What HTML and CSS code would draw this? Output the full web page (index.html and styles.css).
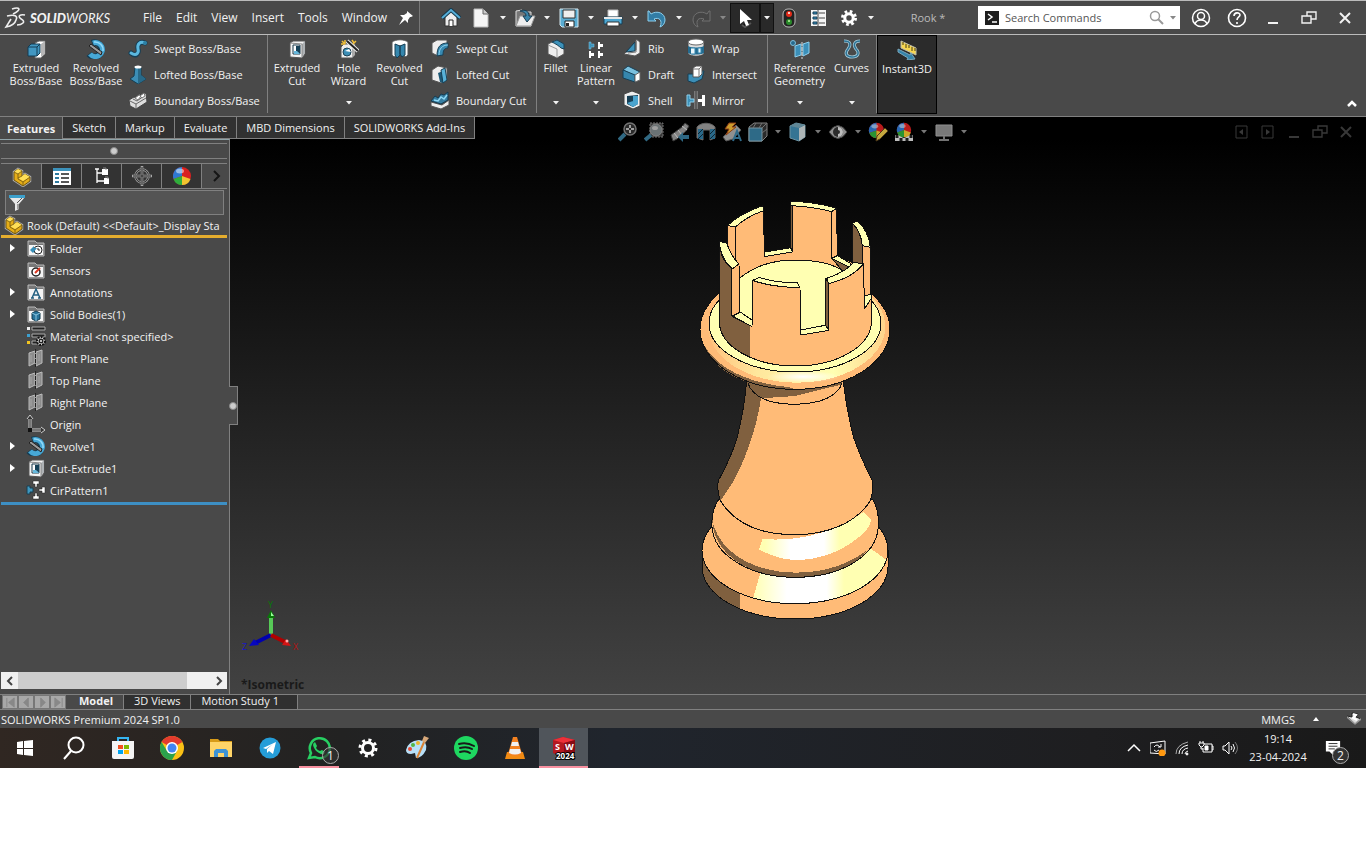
FILE: index.html
```html
<!DOCTYPE html>
<html lang="en">
<head>
  <meta charset="utf-8">
  <meta name="viewport" content="width=device-width, initial-scale=1">
  <title>Rook * - SOLIDWORKS Premium 2024</title>
  <link rel="stylesheet" href="styles.css">
</head>
<body>
  <!-- shared icons -->
  <svg class="defs" aria-hidden="true">
    <symbol id="caret" viewBox="0 0 6 4"><path d="M0 0h6L3 3.500z" fill="currentColor"/></symbol>
    <symbol id="arrow-right" viewBox="0 0 5 8"><path d="M0 0l5 4-5 4z" fill="#fff"/></symbol>
    <symbol id="part" viewBox="0 0 20 20">
      <path d="M2 5l4-3 4 2v5l3-2 5 3v4l-7 5-9-6z" fill="#e9b91f" stroke="#aaa" stroke-width="2.500"/>
      <path d="M2 5l4-3 4 2v5l3-2 5 3v4l-7 5-9-6z" fill="#e5ad18" stroke="#6f5510"/>
      <path d="M2 5l4-3 4 2-4 3zM6 11l4-2 3-2 5 3-7 4z" fill="#ffdf57"/>
      <path d="M2 5l4 2v5l5 3v4M6 7l4-3M11 15l7-5M6 11l4-2" fill="none" stroke="#6f5510" stroke-width=".8"/>
    </symbol>
    <symbol id="revolve" viewBox="0 0 20 20">
      <path d="M6 4A7 7 0 1 1 3 15" fill="none" stroke="#153e55" stroke-width="6.500"/>
      <path d="M7 4A7 7 0 1 1 4 15" fill="none" stroke="#47a8d6" stroke-width="5"/>
      <path d="M8 3A8 8 0 0 1 17 12" fill="none" stroke="#91dafa" stroke-width="1.500"/>
      <path d="M3 7l2-2 11 8-1 3z" fill="#999" stroke="#222"/>
    </symbol>
    <symbol id="cut" viewBox="0 0 20 20">
      <path d="M3 4l3-2h12v13l-3 4-12-1z" fill="#f4f4f4" stroke="#555"/>
      <path d="M15 18V5l3-3v12z" fill="#aeb2b5"/>
      <path d="M6 6h7v9H6z" fill="#fff" stroke="#18384a"/>
      <path d="M9 7h4v8l-4-3z" fill="#174158"/><path d="M7 12h3l3 3H7z" fill="#67b9dd"/>
      <path d="M3 4l12 1v13" fill="none" stroke="#888"/>
    </symbol>
    <symbol id="plane" viewBox="0 0 20 20">
      <path d="M3 5l6-2v12l-6 3zM10 4l6-2v13l-6 3z" fill="#8c8c8c" stroke="#bbb"/>
      <path d="M9.500 1v18" stroke="#222" stroke-dasharray="4 1"/>
      <path d="M5 7v7M13 6v7" stroke="#a5a5a5"/>
    </symbol>
    <symbol id="folder" viewBox="0 0 20 20">
      <path d="M2 3h7l2 2h7v13H2z" fill="#777" stroke="#bbb"/><path d="M3 7h14v10H3z" fill="#f5f5f5"/>
    </symbol>
    <symbol id="ball" viewBox="0 0 20 20">
      <circle cx="10" cy="10" r="9" fill="#d92020"/>
      <path d="M10 10V1A9 9 0 0 0 1.500 13z" fill="#2e78d2"/>
      <path d="M10 10l-8.500 3A9 9 0 0 0 10 19z" fill="#2fae3c"/>
      <path d="M10 10v9a9 9 0 0 0 8.500-6z" fill="#f1c42f"/>
      <ellipse cx="8" cy="5" rx="4" ry="2.500" fill="#fff" opacity=".5"/>
    </symbol>
    <symbol id="restore" viewBox="0 0 16 16">
      <path d="M1 6h9v7H1zM6 6V2h9v7h-5" fill="none" stroke="currentColor" stroke-width="1.400"/>
    </symbol>
    <symbol id="close" viewBox="0 0 16 16"><path d="M3 3l10 10M13 3L3 13" stroke="currentColor" stroke-width="2"/></symbol>
    <symbol id="minimize" viewBox="0 0 16 16"><path d="M3 13h10" stroke="currentColor" stroke-width="2"/></symbol>
  </svg>

  <div class="app">
    <header class="titlebar">
      <div class="logo">
        <svg width="22" height="22" viewBox="0 0 22 22" fill="none" stroke="#eee" stroke-width="1.600">
          <path d="M8 2q6-2 7 0 0 2-6 5"/>
          <path d="M3 9c8-2 11 0 9 4-1 4-5 6-10 7l5-8"/>
          <path d="M21 8c-5-1-7 1-5 3s5 3 3 5-4 2-6 2"/>
        </svg>
        <span><b>SOLID</b>WORKS</span>
      </div>
      <nav class="menu">
        <button>File</button><button>Edit</button><button>View</button><button>Insert</button><button>Tools</button><button>Window</button>
        <button class="pin" aria-label="Pin menu"><svg width="16" height="16" viewBox="0 0 16 16"><path d="M9 1l6 5-2 1h-1l-2 3v3L7 10l-6 5 4-7-3-3h4l3-2z" fill="#fff"/></svg></button>
      </nav>
      <div class="quick">
        <button aria-label="Home"><svg width="20" height="20" viewBox="0 0 20 20"><path d="M4 9v9h12V9l-6-6z" fill="#eee" stroke="#333"/><path d="M8 18v-6h4v6" fill="#fff" stroke="#222"/><path d="M1 10l9-8 9 8" fill="none" stroke="#18394b" stroke-width="4"/><path d="M1 10l9-8 9 8" fill="none" stroke="#55aed8" stroke-width="2"/></svg></button>
        <button aria-label="New"><svg width="20" height="20" viewBox="0 0 20 20"><path d="M3 1h9l5 5v13H3z" fill="#f5f5f5" stroke="#bbb"/><path d="M12 1v5h5" fill="#ccc" stroke="#666"/></svg></button>
        <button class="drop" aria-label="New options"><svg><use href="#caret"/></svg></button>
        <button aria-label="Open"><svg width="22" height="20" viewBox="0 0 22 20"><path d="M2 18V3l6-1 2 2h7v14z" fill="#777" stroke="#ddd"/><path d="M2 18l4-10h15l-4 10z" fill="#eee" stroke="#999"/><path d="M6 3c5-2 9 0 9 5h3l-5 6-4-6h3c0-3-2-4-6-5z" fill="#3b86aa" stroke="#173b50"/></svg></button>
        <button class="drop" aria-label="Open options"><svg><use href="#caret"/></svg></button>
        <button aria-label="Save"><svg width="20" height="20" viewBox="0 0 20 20"><path d="M1 1h18v18H3l-2-2z" fill="#59acd2" stroke="#d5e8f0"/><path d="M4 2h12v8H4z" fill="#eee" stroke="#333"/><path d="M6 13h9v6H6z" fill="#fff" stroke="#222"/><path d="M7 15h3v3H7z" fill="#222"/></svg></button>
        <button class="drop" aria-label="Save options"><svg><use href="#caret"/></svg></button>
        <button aria-label="Print"><svg width="20" height="20" viewBox="0 0 20 20"><path d="M5 2h10v7H5z" fill="#fff" stroke="#bbb"/><path d="M1 9h18v7H1z" fill="#4ca6d0" stroke="#164059"/><path d="M1 9h18v2H1z" fill="#e8e8e8"/><path d="M4 14h12v4H4z" fill="#fff" stroke="#333"/></svg></button>
        <button class="drop" aria-label="Print options"><svg><use href="#caret"/></svg></button>
        <button aria-label="Undo"><svg width="20" height="20" viewBox="0 0 20 20"><path d="M2 3l2 3c6-4 14-1 14 6 0 3-2 6-5 7 3-7-1-10-6-8l2 2H1V3z" fill="#327da5" stroke="#8dd0ee"/></svg></button>
        <button class="drop" aria-label="Undo options"><svg><use href="#caret"/></svg></button>
        <button aria-label="Redo" disabled><svg width="20" height="20" viewBox="0 0 20 20"><path d="M18 3l-2 3C10 2 2 5 2 12c0 3 2 6 5 7-3-7 1-10 6-8l-2 2h8V3z" fill="#454545" stroke="#707070"/></svg></button>
        <button class="drop dim" aria-label="Redo options" disabled><svg><use href="#caret"/></svg></button>
        <button class="pressed" aria-label="Select"><svg width="16" height="20" viewBox="0 0 16 20"><path d="M5 17l3 2 6-4" stroke="#555" stroke-width="2"/><path d="M3 1v15l4-3 2 5 3-1-2-5h5z" fill="#fff"/></svg></button>
        <button class="drop pressed" aria-label="Select options"><svg><use href="#caret"/></svg></button>
        <button aria-label="Rebuild"><svg width="14" height="20" viewBox="0 0 14 20"><rect x="1" y="1" width="12" height="18" rx="5" fill="#222" stroke="#bbb"/><circle cx="7" cy="6" r="3" fill="#e32b19"/><circle cx="7" cy="14" r="3" fill="#298a2a"/><circle cx="7" cy="5" r="1" fill="#fff"/><circle cx="7" cy="13" r="1" fill="#bdf59f"/></svg></button>
        <button aria-label="File properties"><svg width="18" height="18" viewBox="0 0 18 18"><path d="M1 1h15v16H1z" fill="#f5f5f5"/><path d="M3 3h4v2H3zM3 8h4v2H3zM3 13h4v2H3z" fill="#378fc0" stroke="#173f55"/><path d="M9 4h6M9 9h6M9 14h6M8 1v16" stroke="#444"/></svg></button>
        <button aria-label="Options"><svg width="18" height="18" viewBox="0 0 18 18"><circle cx="9" cy="9" r="6.500" fill="none" stroke="#fff" stroke-width="3" stroke-dasharray="2.600 2.500"/><circle cx="9" cy="9" r="4.200" fill="none" stroke="#fff" stroke-width="3"/></svg></button>
        <button class="drop" aria-label="More options"><svg><use href="#caret"/></svg></button>
      </div>
      <div class="doc-title">Rook *</div>
      <div class="search">
        <svg width="14" height="14" viewBox="0 0 14 14"><path d="M0 0h14v14H0z" fill="#1e1e1e"/><path d="M3 3l4 3-4 3M7 11h5" fill="none" stroke="#fff" stroke-width="1.500"/></svg>
        <input type="text" placeholder="Search Commands" aria-label="Search Commands">
        <svg width="15" height="15" viewBox="0 0 15 15" fill="none" stroke="#999"><circle cx="6" cy="6" r="4.500" stroke-width="1.500"/><path d="M9 9l5 5" stroke-width="2"/></svg>
        <button class="drop" aria-label="Search options"><svg><use href="#caret"/></svg></button>
      </div>
      <div class="window-buttons">
        <button aria-label="Login"><svg width="20" height="20" viewBox="0 0 20 20" fill="none" stroke="#fff" stroke-width="1.500"><circle cx="10" cy="10" r="8.500"/><circle cx="10" cy="8" r="3.500"/><path d="M4 16c1-3 3-4 6-4s5 1 6 4"/></svg></button>
        <button aria-label="Help"><svg width="20" height="20" viewBox="0 0 20 20" fill="none" stroke="#fff" stroke-width="1.600"><circle cx="10" cy="10" r="8.500"/><path d="M7 8c0-4 6-4 6-1 0 2-3 2-3 5M10 14v2"/></svg></button>
        <button aria-label="Minimize"><svg width="16" height="16"><use href="#minimize"/></svg></button>
        <button aria-label="Restore"><svg width="16" height="16"><use href="#restore"/></svg></button>
        <button aria-label="Close"><svg width="16" height="16"><use href="#close"/></svg></button>
      </div>
    </header>

    <section class="ribbon">
      <div class="group group-boss">
        <button class="big w60"><svg viewBox="0 0 20 20"><path d="M9 4l4-2h6v13l-4 4H9z" fill="#fff" stroke="#666"/><path d="M15 18V5l4-3v13z" fill="#b5b5b5"/><path d="M2 8l3-3h9v9l-3 3H2z" fill="#4297c1" stroke="#123d54"/><path d="M2 8h9v9M11 8l3-3" fill="none" stroke="#123d54"/></svg>Extruded Boss/Base</button>
        <button class="big w60"><svg><use href="#revolve"/></svg>Revolved Boss/Base</button>
        <div class="stack">
          <button><svg viewBox="0 0 20 20"><path d="M3 15c6 5 8-1 7-4-1-5 2-8 7-6" fill="none" stroke="#163f56" stroke-width="5" stroke-linecap="round"/><path d="M3 15c6 4 8-1 7-4-1-5 2-8 7-6" fill="none" stroke="#5bb8df" stroke-width="3" stroke-linecap="round"/><circle cx="17" cy="5" r="2" fill="#2c80a5"/></svg>Swept Boss/Base</button>
          <button><svg viewBox="0 0 20 20"><path d="M7 3h6v8l5 4-8 5-8-5 4-3z" fill="#3c8eb6" stroke="#173e52"/><path d="M10 3h3v8l5 4-8 5z" fill="#286988"/><ellipse cx="10" cy="3" rx="3.500" ry="1.500" fill="#fff"/></svg>Lofted Boss/Base</button>
          <button><svg viewBox="0 0 20 20"><path d="M1 10l5-3 2 1 3-4 3 1 4-2 1 9-11 7-6-3z" fill="#ddd" stroke="#444"/><path d="M2 11l6 3 10-6M8 14v5M5 9l4 2 7-5" fill="none" stroke="#666"/><path d="M7 8l4-3 2 1-3 4zM12 6l4-3 1 3-3 2z" fill="#fff" stroke="#777"/></svg>Boundary Boss/Base</button>
        </div>
      </div>
      <div class="group">
        <button class="big w58"><svg><use href="#cut"/></svg>Extruded Cut</button>
        <button class="big w45"><svg viewBox="0 0 20 20"><path d="M2 8l3-3h11v11l-3 3H2z" fill="#eee" stroke="#555"/><path d="M13 19V8l3-3v11z" fill="#aaa"/><circle cx="8" cy="13" r="4" fill="#3c8eb6" stroke="#1d4255"/><path d="M6 12l4-2 2 3z" fill="#fff"/><path d="M8 2l11 10" stroke="#eee" stroke-width="4"/><path d="M8 2l11 10" stroke="#222" stroke-width="2"/><path d="M3 2l2 2M6 1v4M13 1l2 3M17 2l-3 3M2 5h4" stroke="#f0c03b" stroke-width="1.500"/></svg>Hole Wizard<svg class="more"><use href="#caret"/></svg></button>
        <button class="big w57"><svg viewBox="0 0 20 20"><path d="M2 3c4-3 12-3 16 0v13c-1 2-4 2-5 1V7H7v10c-2 1-4 1-5-1z" fill="#fff" stroke="#555"/><path d="M5 5l5 2v9l-3 3-2-3zM10 7l5-2v11l-3 2-2-3z" fill="#3586ad" stroke="#173f55"/></svg>Revolved Cut</button>
        <div class="stack">
          <button><svg viewBox="0 0 20 20"><path d="M2 5l5-3h10v6l-9 10-6-3z" fill="#eee" stroke="#555"/><path d="M7 18C7 9 10 5 18 5v5c-4 0-5 3-5 7z" fill="#388ab2" stroke="#173f55"/><path d="M9 17c0-6 3-10 9-10" fill="none" stroke="#8fd3ee"/></svg>Swept Cut</button>
          <button><svg viewBox="0 0 20 20"><path d="M2 6l6-4 9 2v12l-6 3-9-3z" fill="#eee" stroke="#555"/><path d="M8 9l5-2v12l-3-1z" fill="#1d5876"/><path d="M11 6l4-2 2 12-4 3z" fill="#58b1d8" stroke="#173f55"/></svg>Lofted Cut</button>
          <button><svg viewBox="0 0 20 20"><path d="M1 12l11 3 7-5v5l-8 4-10-3z" fill="#eee" stroke="#555"/><path d="M1 11l4-5 3 2 3-4 3 1 4-3v8l-7 4z" fill="#367ea2" stroke="#163b50"/><path d="M4 10l4 1 3-4 3 2 3-4" fill="none" stroke="#8ed8f5" stroke-width="1.500"/></svg>Boundary Cut</button>
        </div>
      </div>
      <div class="group">
        <button class="big w37"><svg viewBox="0 0 20 20"><path d="M2 5l8-4 8 4v10l-7 4-9-4z" fill="#eee" stroke="#555"/><path d="M6 3l5-2 7 4v5l-3-1c-2-2-5-4-9-6z" fill="#3d91b9" stroke="#173f55"/><path d="M2 6l9 4v9" fill="none" stroke="#999"/></svg>Fillet<svg class="more"><use href="#caret"/></svg></button>
        <button class="big w44"><svg viewBox="0 0 20 20"><g fill="#fff"><path d="M12 3h2v2h3v3h-3v2h-2zM3 12h2v2h3v3H5v2H3zM12 12h2v2h3v3h-3v2h-2z"/><path d="M3 3h2v2h3v3H5v2H3z" fill="#3d91b9" stroke="#7fc9e8" stroke-width=".5"/></g></svg>Linear Pattern<svg class="more"><use href="#caret"/></svg></button>
        <div class="stack w64">
          <button><svg viewBox="0 0 20 20"><path d="M14 1l4 3v11l-5 3-11-2 3-3 9-1z" fill="#eee" stroke="#555"/><path d="M13 4v9l-9 1z" fill="#3d91b9" stroke="#163b50"/><path d="M14 3v11l-8 1" fill="none" stroke="#777"/></svg>Rib</button>
          <button><svg viewBox="0 0 20 20"><path d="M1 6l5-4 12 6-5 4z" fill="#7bc1df" stroke="#173f55"/><path d="M1 6l12 5v7L1 14z" fill="#3687ae" stroke="#173f55"/><path d="M13 11l5-3v8l-5 2z" fill="#fff" stroke="#666"/></svg>Draft</button>
          <button><svg viewBox="0 0 20 20"><path d="M2 4l8-3 8 3v12l-7 3-9-4z" fill="#eee" stroke="#444"/><path d="M5 6l11-1v9l-5 3-6-3z" fill="#173f55"/><path d="M11 6h5v8l-5-2zM5 13l6-2 5 3-5 3z" fill="#4ba4ce"/></svg>Shell</button>
        </div>
        <div class="stack w85">
          <button><svg viewBox="0 0 20 20"><path d="M2 4v12c4 3 12 3 16 0V4z" fill="#ddd" stroke="#444"/><ellipse cx="10" cy="4" rx="8" ry="3" fill="#fff" stroke="#666"/><path d="M2 8c4 2 12 2 16 0v7c-4 2-12 2-16 0z" fill="#256b8f"/><path d="M5 10h4v6H5M12 10h3v5h-3z" fill="#eaf6fb" stroke="#3587b0"/></svg>Wrap</button>
          <button><svg viewBox="0 0 20 20"><path d="M2 10h6v-3h10l-2 8-8 4-6-2z" fill="#3c8eb6" stroke="#183e52"/><path d="M7 4l3-2h6v8l-3 3H7z" fill="#fff" stroke="#555"/><path d="M13 13V5l3-3M7 5h6" stroke="#777" fill="none"/></svg>Intersect</button>
          <button><svg viewBox="0 0 20 20"><path d="M1 5h3v4h4v3H4v4H1z" fill="#3d91b9" stroke="#8ed0ec"/><path d="M19 5h-3v4h-4v3h4v4h3z" fill="#fff"/><path d="M10 1v18" stroke="#aaa" stroke-width="3"/><path d="M10 1v18" stroke="#111"/></svg>Mirror</button>
        </div>
      </div>
      <div class="group">
        <button class="big w63"><svg viewBox="0 0 20 20"><circle cx="3" cy="4" r="2.500" fill="#286b8e" stroke="#7dbddb"/><path d="M5 7l6-2v11l-6 2zM13 5l6-2v11l-6 3z" fill="#3b8fb9" stroke="#8dd0ee"/><path d="M12 3v17" stroke="#ddd" stroke-dasharray="4 1"/></svg>Reference Geometry<svg class="more"><use href="#caret"/></svg></button>
        <button class="big w41"><svg viewBox="0 0 20 20" fill="none"><path d="M2 2c7 0 7 4 4 8-4 5-1 8 4 8 6 0 8-4 4-8-3-4-2-8 4-8" stroke="#a8ccda" stroke-width="3"/><path d="M2 2c7 0 7 4 4 8-4 5-1 8 4 8 6 0 8-4 4-8-3-4-2-8 4-8" stroke="#2d7395" stroke-width="1.500"/></svg>Curves<svg class="more"><use href="#caret"/></svg></button>
      </div>
      <button class="big instant"><svg viewBox="0 0 20 20"><path d="M4 1l15 7v7L4 8z" fill="#f7d650" stroke="#bba"/><path d="M6 2v3M9 4v4M12 5v3M15 7v4M18 8v3" stroke="#443a10"/><path d="M1 9l12 6 1-2 4 6-8 1 1-2L1 12z" fill="#3684aa" stroke="#79a7bc"/></svg>Instant3D</button>
      <button class="collapse" aria-label="Collapse ribbon"><svg width="12" height="8" viewBox="0 0 12 8"><path d="M2 6l4-4 4 4" fill="none" stroke="#fff" stroke-width="2.500"/></svg></button>
    </section>

    <main class="document">
      <div class="document-bar">
        <nav class="tabs">
          <button class="active">Features</button><button>Sketch</button><button>Markup</button><button>Evaluate</button><button>MBD Dimensions</button><button>SOLIDWORKS Add-Ins</button>
        </nav>
        <div class="view-tools">
          <button aria-label="Zoom to fit"><svg viewBox="0 0 20 20"><path d="M1 18l6-6" stroke="#3a7c9b" stroke-width="4"/><circle cx="12" cy="7" r="6" fill="#333" stroke="#888" stroke-width="1.500"/><path d="M12 3v8M8 7h8" stroke="#bbb" stroke-dasharray="3 2" stroke-width="2"/></svg></button>
          <button aria-label="Zoom to area"><svg viewBox="0 0 20 20"><path d="M6 1h13v14H6z" fill="#444" stroke="#888" stroke-dasharray="2 1"/><path d="M1 18l6-5" stroke="#3a7c9b" stroke-width="4"/><circle cx="12" cy="8" r="6" fill="#7d8689" stroke="#999"/><ellipse cx="11" cy="6" rx="3" ry="2" fill="#bbb"/></svg></button>
          <button aria-label="Previous view"><svg viewBox="0 0 20 20"><path d="M1 13L12 5l3-4 4 3-3 5-9 8-4 2z" fill="#999" stroke="#444"/><path d="M4 11l4 5M8 8l4 5M12 4l5 4" stroke="#ddd"/><path d="M8 15l5-5v3h6v4h-6v3z" fill="#37799a"/></svg></button>
          <button aria-label="Section view"><svg viewBox="0 0 20 20"><path d="M1 5c4-5 14-5 18 0v11l-5 2V8H7v10l-6-2z" fill="#999" stroke="#777"/><path d="M2 7h5v10H2zM14 7h5v10h-5z" fill="#327ba0"/><path d="M2 12l5-5M2 17l5-5M14 12l5-5M14 17l5-5" stroke="#0c2a3b"/></svg></button>
          <button aria-label="Dynamic annotation views"><svg viewBox="0 0 20 20"><path d="M1 15L14 3l5 5-8 9-7 2z" fill="#aaa" stroke="#666"/><path d="M7 1h7l-4 4h4L4 13l3-6H3z" fill="#efb737" stroke="#a54618"/><path d="M11 19l4-10 4 10M12 16h6" fill="none" stroke="#387da2" stroke-width="2"/></svg></button>
          <button aria-label="View orientation"><svg viewBox="0 0 20 20"><path d="M1 5l5-4h13v13l-5 5H1z" fill="#333" stroke="#999"/><path d="M1 6h13v13H1z" fill="#377d9f" stroke="#8dafbc"/><path d="M14 6l5-5M8 1l-3 5M14 1l-3 5M14 11l5-4" stroke="#888"/></svg></button>
          <button class="drop" aria-label="Orientation options"><svg><use href="#caret"/></svg></button>
          <button aria-label="Display style"><svg viewBox="0 0 20 20"><path d="M2 4l6-3 9 2v12l-6 4-9-3z" fill="#3f89ad" stroke="#7eabbe"/><path d="M11 6l6-3v12l-6 4z" fill="#ccd5d8"/><path d="M2 4l9 2 6-3-9-2z" fill="#719eaf"/></svg></button>
          <button class="drop" aria-label="Display options"><svg><use href="#caret"/></svg></button>
          <button aria-label="Hide or show items"><svg viewBox="0 0 20 20"><path d="M1 10q9-13 18 0-9 13-18 0z" fill="#aaa" stroke="#555"/><circle cx="10" cy="10" r="5" fill="#333"/><path d="M10 5a5 5 0 0 1 0 10z" fill="#ddd"/><circle cx="10" cy="10" r="2" fill="#333"/></svg></button>
          <button class="drop" aria-label="Visibility options"><svg><use href="#caret"/></svg></button>
          <button aria-label="Edit appearance"><svg viewBox="0 0 20 20"><use href="#ball" width="17" height="17"/><path d="M8 19l1-5 8-8 3 3-8 8z" fill="#e8c64b" stroke="#5b431d"/></svg></button>
          <button aria-label="Apply scene"><svg viewBox="0 0 20 20"><path d="M1 13h18v6H1z" fill="#ddd"/><path d="M3 13v3M7 16v3M10 13v3M13 16v3M17 13v3" stroke="#222" stroke-width="3"/><use href="#ball" x="2" width="16" height="16"/></svg></button>
          <button class="drop" aria-label="Scene options"><svg><use href="#caret"/></svg></button>
          <button aria-label="View settings"><svg viewBox="0 0 20 20"><path d="M2 3h16v11H2z" fill="#8f8f8f" stroke="#aaa"/><path d="M10 14v3M5 18h10" stroke="#888" stroke-width="2"/></svg></button>
          <button class="drop" aria-label="View setting options"><svg><use href="#caret"/></svg></button>
        </div>
        <div class="child-buttons">
          <button aria-label="Previous pane"><svg width="14" height="14" viewBox="0 0 14 14"><path d="M1 1h11v12H1z" fill="none" stroke="currentColor"/><path d="M8 4v6L4 7z" fill="currentColor"/></svg></button>
          <button aria-label="Next pane"><svg width="14" height="14" viewBox="0 0 14 14"><path d="M1 1h11v12H1z" fill="none" stroke="currentColor"/><path d="M5 4v6l4-3z" fill="currentColor"/></svg></button>
          <button aria-label="Minimize document"><svg width="16" height="16"><use href="#minimize"/></svg></button>
          <button aria-label="Restore document"><svg width="16" height="16"><use href="#restore"/></svg></button>
          <button aria-label="Close document"><svg width="16" height="16"><use href="#close"/></svg></button>
        </div>
      </div>

      <div class="workspace">
        <aside class="sidebar">
          <div class="grip"><i></i></div>
          <div class="panel-tabs">
            <button class="active" aria-label="Feature tree"><svg><use href="#part"/></svg></button>
            <button aria-label="Properties"><svg viewBox="0 0 20 20"><path d="M1 2h18v17H1z" fill="#fff"/><path d="M1 2h18v3H1z" fill="#3c92bb"/><path d="M3 7h4v2H3zM3 11h4v2H3zM3 15h4v2H3z" fill="#2f7ba0"/><path d="M9 8h8M9 12h8M9 16h8" stroke="#222" stroke-width="1.500"/></svg></button>
            <button aria-label="Configurations"><svg viewBox="0 0 20 20"><path d="M3 3h4M5 3v14M5 7h6M5 15h7" fill="none" stroke="#fff" stroke-width="1.300"/><path d="M10 3h6v6h-6zM12 12h5v6h-5z" fill="#fff"/><path d="M11 2h3v2M13 11h3v2" stroke="#888" fill="none"/></svg></button>
            <button aria-label="Dimensions"><svg viewBox="0 0 20 20"><circle cx="10" cy="10" r="6.500" fill="#333" stroke="#999" stroke-width="2.500"/><circle cx="10" cy="10" r="6.500" fill="none" stroke="#222"/><path d="M10 0v20M0 10h20" stroke="#aaa" stroke-width="2.500"/><path d="M10 1v18M1 10h18" stroke="#222"/></svg></button>
            <button aria-label="Display manager"><svg><use href="#ball"/></svg></button>
            <button class="next" aria-label="More panels"><svg viewBox="0 0 20 20"><path d="M7 5l5 5-5 5" fill="none" stroke="#151515" stroke-width="2"/></svg></button>
          </div>
          <label class="filter">
            <svg width="18" height="18" viewBox="0 0 18 18"><path d="M1 3l6 7v7l4-2v-5l6-7z" fill="#e8e8e8"/><path d="M10 10v5M9 9l5-5" stroke="#555"/><path d="M1 1h16v3H1z" fill="#3ca0cc"/></svg>
            <input type="text" aria-label="Filter tree">
          </label>
          <div class="root"><svg><use href="#part"/></svg><span>Rook (Default) &lt;&lt;Default&gt;_Display Sta</span></div>
          <ul class="tree">
            <li><svg class="expand"><use href="#arrow-right"/></svg><svg viewBox="0 0 20 20"><use href="#folder"/><circle cx="12" cy="12" r="4" fill="#fff" stroke="#222"/><path d="M12 10v2h2" stroke="#222" fill="none"/><path d="M4 12l4-4v2h3l-4 5z" fill="#398fb8"/></svg>Folder</li>
            <li><svg viewBox="0 0 20 20"><use href="#folder"/><circle cx="10" cy="12" r="4" fill="#fff" stroke="#222" stroke-width="1.500"/><path d="M9 13l5-5" stroke="#dc3721" stroke-width="2"/></svg>Sensors</li>
            <li><svg class="expand"><use href="#arrow-right"/></svg><svg viewBox="0 0 20 20"><use href="#folder"/><path d="M6 16l4-9 4 9M7 13h6M5 16h3M12 16h3" fill="none" stroke="#246080" stroke-width="1.500"/></svg>Annotations</li>
            <li><svg class="expand"><use href="#arrow-right"/></svg><svg viewBox="0 0 20 20"><use href="#folder"/><path d="M6 9l4-2 4 2v6l-4 2-4-2z" fill="#26739a" stroke="#10384d"/><path d="M6 9l4 2 4-2M10 11v6" fill="none" stroke="#8cc5df"/></svg>Solid Bodies(1)</li>
            <li><svg viewBox="0 0 20 20"><path d="M1 1h3v3H1z" fill="#eee"/><path d="M1 8h3v3H1z" fill="#3ca0d0"/><path d="M1 15h3v3H1z" fill="#f0c320"/><path d="M6 1h13v3H6zM6 8h13v3H6zM6 15h8v3H6z" fill="#222" stroke="#aaa"/><circle cx="15" cy="15" r="4" fill="#eee" stroke="#111" stroke-width="2" stroke-dasharray="2 1"/><circle cx="15" cy="15" r="2.500" fill="#222"/><circle cx="15" cy="15" r="1" fill="#eee"/></svg>Material &lt;not specified&gt;</li>
            <li><svg><use href="#plane"/></svg>Front Plane</li>
            <li><svg><use href="#plane"/></svg>Top Plane</li>
            <li><svg><use href="#plane"/></svg>Right Plane</li>
            <li><svg viewBox="0 0 20 20"><path d="M4 3v13h13" fill="none" stroke="#ccc" stroke-width="3"/><path d="M4 2v14h12" fill="none" stroke="#222"/><path d="M1 5l3-4 3 4M15 13l4 3-4 3" fill="#333" stroke="#ccc"/><path d="M2 14h4v4H2z" fill="#111"/></svg>Origin</li>
            <li><svg class="expand"><use href="#arrow-right"/></svg><svg><use href="#revolve"/></svg>Revolve1</li>
            <li><svg class="expand"><use href="#arrow-right"/></svg><svg><use href="#cut"/></svg>Cut-Extrude1</li>
            <li><svg viewBox="0 0 20 20"><path d="M7 1h6v3h-2v3H9V4H7zM7 19h6v-3h-2v-3H9v3H7zM19 7v6h-3v-2h-3V9h3V7z" fill="#fff" stroke="#222" stroke-width=".5"/><path d="M1 6h3v2h3v4H4v2H1z" fill="#3e97bf" stroke="#193f50"/></svg>CirPattern1</li>
          </ul>
          <div class="scrollbar">
            <button aria-label="Scroll left"><svg viewBox="0 0 8 10"><path d="M6 1L2 5l4 4" fill="none" stroke="#444" stroke-width="2"/></svg></button>
            <div class="track"><div class="thumb"></div></div>
            <button aria-label="Scroll right"><svg viewBox="0 0 8 10"><path d="M2 1l4 4-4 4" fill="none" stroke="#444" stroke-width="2"/></svg></button>
          </div>
          <button class="splitter" aria-label="Hide panel"><i></i></button>
        </aside>

        <section class="viewport">
          <svg class="rook" viewBox="48 24 594 1272" stroke-linejoin="round" role="img" aria-label="Rook model">
            <defs>
              <linearGradient id="shine-base" gradientUnits="userSpaceOnUse" x1="220" y1="0" x2="620" y2="0"><stop offset="0" stop-color="#ffffb2"/><stop offset=".25" stop-color="#fff"/><stop offset=".55" stop-color="#fff"/><stop offset=".68" stop-color="#ffffb2"/></linearGradient>
              <linearGradient id="shine-ring" gradientUnits="userSpaceOnUse" x1="237" y1="0" x2="573" y2="0"><stop offset=".05" stop-color="#ffffb2"/><stop offset=".28" stop-color="#fff"/><stop offset=".58" stop-color="#fff"/><stop offset=".72" stop-color="#ffffb2"/></linearGradient>
              <radialGradient id="shine-rim"><stop offset="0" stop-color="#fff"/><stop offset="1" stop-color="#fff" stop-opacity="0"/></radialGradient>
              <linearGradient id="rim" gradientUnits="userSpaceOnUse" x1="60" y1="0" x2="630" y2="0"><stop offset="0" stop-color="#ffbb77"/><stop offset=".3" stop-color="#ffe79c"/><stop offset=".7" stop-color="#ffffb2"/><stop offset="1" stop-color="#ffd088"/></linearGradient>
              <clipPath id="clip-base"><ellipse cx="345" cy="1081" rx="279" ry="160"/></clipPath>
              <clipPath id="clip-left"><path d="M0 0h210v560H0z"/></clipPath>
              <clipPath id="clip-foot"><path d="M0 1000h180v300H0z"/></clipPath>
            </defs>
            <!-- foot -->
            <path d="M66 1080V1130A279 157 0 0 0 624 1130V1080z" fill="#ffbb77"/>
            <path d="M66 1080V1130A279 157 0 0 0 624 1130V1080z" fill="#80603f" clip-path="url(#clip-foot)"/>
            <path d="M66 1080V1130A279 157 0 0 0 624 1130V1080z" class="edge"/>
            <ellipse cx="345" cy="1081" rx="279" ry="160" fill="#ffbb77"/>
            <path d="M242 1145L218 1230 300 1260 500 1260 640 1125 562 1068 480 1130z" fill="url(#shine-base)" clip-path="url(#clip-base)"/>
            <ellipse cx="345" cy="1081" rx="279" ry="160" class="edge"/>
            <!-- ring -->
            <path d="M116 928Q92 965 96 1010C100 1095 210 1162 345 1162C480 1162 590 1100 595 1010Q598 960 578 928z" fill="#ffbb77"/>
            <path d="M96 985C98 1095 210 1162 345 1162C440 1162 525 1130 565 1078C510 1120 440 1148 345 1148C215 1148 110 1080 96 985z" fill="#80603f"/>
            <path d="M248 1047Q410 1060 550 967L573 990Q570 1015 535 1043Q450 1110 345 1110Q290 1108 237 1078z" fill="url(#shine-ring)"/>
            <path d="M116 928Q92 965 96 1010C100 1095 210 1162 345 1162C480 1162 590 1100 595 1010Q598 960 578 928z" class="edge"/>
            <!-- body -->
            <path d="M200 575Q192 660 172 740Q155 800 115 872Q110 900 120 930C165 1005 250 1034 345 1034C440 1034 530 1000 572 930Q580 905 577 872Q540 800 520 740Q500 660 490 575z" fill="#ffbb77"/>
            <path d="M200 570Q192 660 172 740Q155 800 115 872Q110 900 122 932L160 875Q200 800 225 710Q238 660 243 625L345 618 487 583 487 570z" fill="#80603f"/>
            <path d="M200 575Q192 660 172 740Q155 800 115 872Q110 900 120 930C165 1005 250 1034 345 1034C440 1034 530 1000 572 930Q580 905 577 872Q540 800 520 740Q500 660 490 575z" class="edge"/>
            <path d="M203 578Q225 642 345 643Q465 640 487 578" class="edge"/>
            <!-- flange -->
            <ellipse cx="345" cy="418" rx="285" ry="180" fill="#ffbb77"/>
            <path d="M66 455C100 555 220 598 345 598L330 592C210 580 110 540 66 455z" fill="#80603f"/>
            <ellipse cx="350" cy="410" rx="266" ry="168" fill="url(#rim)"/>
            <ellipse cx="370" cy="560" rx="110" ry="18" fill="url(#shine-rim)"/>
            <ellipse cx="345" cy="418" rx="285" ry="180" class="edge"/>
            <ellipse cx="345" cy="400" rx="258" ry="146" fill="#ffffb2"/>
            <ellipse cx="345" cy="400" rx="258" ry="146" class="edge"/>
            <!-- battlements, back to front -->
            <path d="M142 107L167 110Q200 80 251 62L253 200 337 186 337 47Q400 50 470 57L472 198 530 225 550 300 550 400H150z" fill="#ffbb77"/>
            <path d="M142 107V240M167 110V260M251 62L253 200M455 65V205M470 57L472 198" class="edge"/>
            <path d="M330 38L337 47V186L330 174z" fill="#80603f" class="edge-fill"/>
            <path d="M255 186L332 173 337 186 253 200z" class="top"/>
            <path d="M142 107Q180 70 248 47L251 62Q200 80 167 110z" class="top"/>
            <path d="M331 34Q410 36 470 55L455 65Q400 50 333 47z" class="top"/>
            <path d="M455 205L490 245 535 240 512 222z" fill="#80603f" class="edge-fill"/>
            <path d="M455 205L472 197 512 220 510 232z" class="top"/>
            <path d="M180 264Q245 210 345 210Q440 210 490 243L530 300 520 430H180z" fill="#ffffb2"/>
            <path d="M180 264Q245 210 345 210Q440 210 490 243" class="edge"/>
            <path d="M517 100Q543 125 547 167V240H517z" fill="#80603f" class="edge-fill"/>
            <path d="M547 167L571 172V350H547z" fill="#ffbb77" class="edge-fill"/>
            <path d="M517 100L532 93Q565 120 571 172L547 167Q543 125 517 100z" class="top"/>
            <path d="M555 318L573 312V345L550 360z" class="top"/>
            <path d="M158 378L182 367 216 390V410z" class="top"/>
            <path d="M363 420L440 405 446 421 362 435z" class="top"/>
            <path d="M437 265L446 280V421L438 408z" fill="#80603f" class="edge-fill"/>
            <path d="M118 160V395A228 133 0 0 0 574 395V325L553 357 551 222Q520 258 446 280V421L362 435 360 293Q280 292 218 272L216 410 155 378V236Q120 205 118 160z" fill="#ffbb77"/>
            <path d="M118 160V395A228 133 0 0 0 574 395V325L553 357 551 222Q520 258 446 280V421L362 435 360 293Q280 292 218 272L216 410 155 378V236Q120 205 118 160z" fill="#80603f" clip-path="url(#clip-left)"/>
            <path d="M118 160V395A228 133 0 0 0 574 395V325L553 357 551 222Q520 258 446 280V421L362 435 360 293Q280 292 218 272L216 410 155 378V236Q120 205 118 160z" class="edge"/>
            <path d="M155 236L177 222 179 367 155 378z" fill="#ffbb77" class="edge-fill"/>
            <path d="M118 155L140 158Q150 195 177 222L158 236Q120 205 118 155z" class="top"/>
            <path d="M218 271L238 262Q290 280 352 277L360 293Q280 292 218 271z" class="top"/>
            <path d="M440 265Q500 245 520 217L550 221Q520 262 446 281z" class="top"/>
          </svg>
          <svg class="triad" width="60" height="60" viewBox="0 0 60 60">
            <path d="M31 38V19" stroke="#57c957" stroke-width="4"/><path d="M27 21l4-8 4 8z" fill="#087808"/><path d="M31 15l3 4h-3z" fill="#9f9"/>
            <path d="M31 38l-16 8" stroke="#0000b0" stroke-width="4"/><path d="M9 49l5-7 5 6z" fill="#0707c0"/>
            <path d="M31 38l16 8" stroke="#b00000" stroke-width="4"/><path d="M51 49l-9-1 4-6z" fill="#d41515"/><circle cx="47" cy="44" r="1.500" fill="#faa"/>
            <text x="28" y="11" fill="#087808">Y</text><text x="2" y="53" fill="#1717c6">Z</text><text x="53" y="53" fill="#b41313">X</text>
          </svg>
          <p class="view-name">*Isometric</p>
        </section>
      </div>
    </main>

    <nav class="model-tabs">
      <div class="step-buttons">
        <button aria-label="First tab" disabled><svg viewBox="0 0 12 12"><path d="M2 1v10M10 1v10L4 6z"/></svg></button>
        <button aria-label="Previous tab" disabled><svg viewBox="0 0 12 12"><path d="M8 1v10L3 6z"/></svg></button>
        <button aria-label="Next tab" disabled><svg viewBox="0 0 12 12"><path d="M4 1v10l5-5z"/></svg></button>
        <button aria-label="Last tab" disabled><svg viewBox="0 0 12 12"><path d="M2 1v10l6-5zM10 1v10"/></svg></button>
      </div>
      <button class="active">Model</button><button>3D Views</button><button class="motion">Motion Study 1</button>
    </nav>

    <footer class="status">
      <span class="version">SOLIDWORKS Premium 2024 SP1.0</span>
      <span>MMGS</span>
      <svg class="up" width="6" height="4" viewBox="0 0 6 4"><path d="M0 4h6L3 0z" fill="#fff"/></svg>
      <svg width="16" height="14" viewBox="0 0 16 14"><path d="M1 4l5 1V1l6 1-2 3 5 2-6 6z" fill="#ddd" stroke="#222"/><path d="M1 4l8 7 6-5v2l-6 5-8-7z" fill="#999"/><path d="M7 2l3 1-3 3 4 2" stroke="#fff" fill="none" stroke-width="2"/></svg>
    </footer>

    <div class="taskbar">
      <button class="start" aria-label="Start"><svg viewBox="0 0 18 18" fill="#fff"><path d="M1 3l6-1v7H1zM8 2l9-1v8H8zM1 10h6v6l-6-1zM8 10h9v7l-9-1z"/></svg></button>
      <button aria-label="Search"><svg viewBox="0 0 24 24" fill="none" stroke="#fff" stroke-width="2"><circle cx="14" cy="9" r="7.500"/><path d="M9 15l-7 8"/></svg></button>
      <button aria-label="Store"><svg viewBox="0 0 24 24"><path d="M7 6V2h10v4" fill="none" stroke="#35b5f1" stroke-width="2"/><path d="M1 5h22v16q0 2-2 2H3q-2 0-2-2z" fill="#f5f5f5"/><path d="M7 9h5v4H7z" fill="#f25022"/><path d="M13 9h5v4h-5z" fill="#7fba00"/><path d="M7 14h5v4H7z" fill="#00a4ef"/><path d="M13 14h5v4h-5z" fill="#ffb900"/></svg></button>
      <button aria-label="Chrome"><svg viewBox="0 0 24 24"><circle cx="12" cy="12" r="12" fill="#fbc116"/><path d="M12 12L1.600 6A12 12 0 0 1 22.400 6z" fill="#e33b2e"/><path d="M1.600 6A12 12 0 0 0 12 24l5-9-5 2-5-2z" fill="#2ba24c"/><circle cx="12" cy="12" r="6" fill="#fff"/><circle cx="12" cy="12" r="4.500" fill="#4285f4"/></svg></button>
      <button aria-label="File Explorer"><svg viewBox="0 0 24 24"><path d="M1 3h8l2 2h12v4H1z" fill="#d89b18"/><path d="M1 6h22v15H1z" fill="#ffd468"/><path d="M5 21v-6l2-2h10l2 2v6h-4v-4H9v4z" fill="#3f93d4"/></svg></button>
      <button aria-label="Telegram"><svg viewBox="0 0 24 24"><circle cx="12" cy="12" r="10.500" fill="#259dd8"/><path d="M5 12l13-6-3 12-4-3-2 2v-4l6-5-7 5z" fill="#fff"/></svg></button>
      <button class="open" aria-label="WhatsApp"><svg viewBox="0 0 24 24"><path d="M2 22l2-5a10 10 0 1 1 4 4z" fill="none" stroke="#27cf62" stroke-width="2.500"/><path d="M8 6l2 4-1 2q2 3 4 3l2-1 3 2q-1 4-6 1-5-3-6-8 0-2 2-3z" fill="#27cf62"/></svg><span class="badge">1</span></button>
      <button aria-label="Settings"><svg viewBox="0 0 24 24" fill="none" stroke="#fff"><circle cx="12" cy="12" r="8" stroke-width="3" stroke-dasharray="3 3.300"/><circle cx="12" cy="12" r="5.500" stroke-width="3"/></svg></button>
      <button aria-label="Paint"><svg viewBox="0 0 24 24"><path d="M1 14Q3 5 14 4q9 1 7 10-4 8-10 8l-1-5-4 1q-5 0-5-4z" fill="#b8e0f8"/><circle cx="5" cy="13" r="2" fill="#e64b35"/><circle cx="8" cy="9" r="2" fill="#52b645"/><circle cx="13" cy="7" r="2" fill="#eeb52c"/><path d="M20 4l-8 18" stroke="#d98335" stroke-width="2"/><path d="M17 5l2-5 5 2-4 5z" fill="#d8a87a"/></svg></button>
      <button aria-label="Spotify"><svg viewBox="0 0 24 24"><circle cx="12" cy="12" r="12" fill="#1ed760"/><path d="M5 8q8-2 15 2M6 12q7-2 12 1M6 16q6-2 10 1" fill="none" stroke="#191919" stroke-width="2" stroke-linecap="round"/></svg></button>
      <button aria-label="VLC"><svg viewBox="0 0 24 24"><path d="M4 16h16l2 7H2z" fill="#f28b12"/><path d="M10 1h4l5 17q-7 4-14 0z" fill="#f58220"/><path d="M9 6h6l1 4H8zM7 13h10l1 4q-6 3-12 0z" fill="#f1f1f1"/></svg></button>
      <button class="open current" aria-label="SOLIDWORKS 2024"><svg viewBox="0 0 24 24"><path d="M1 4l10-3 12 3v12l-11 6L1 17z" fill="#b41820"/><path d="M1 4l10-3 12 3-11 3z" fill="#ed3039"/><path d="M12 7l11-3v13l-11 5z" fill="#880c15"/><text x="3" y="14" class="sw">S</text><text x="13" y="14" class="sw">W</text><text x="4" y="23" class="year">2024</text></svg></button>
      <div class="tray">
        <button aria-label="Hidden icons"><svg viewBox="0 0 16 16"><path d="M2 11l6-6 6 6" fill="none" stroke="#fff" stroke-width="1.500"/></svg></button>
        <button aria-label="Updates"><svg viewBox="0 0 16 16"><path d="M0 3l15-2v13L0 13z" fill="none" stroke="#fff"/><path d="M4 7q3-4 6 0M11 4v3H8M4 10q2 3 5 0" fill="none" stroke="#fff"/><circle cx="12" cy="13" r="3.500" fill="#ff980f"/></svg></button>
        <button aria-label="Network"><svg viewBox="0 0 16 16" fill="none" stroke="#fff"><path d="M2 14Q2 5 14 2" stroke="#aaa"/><path d="M5 14q0-7 9-9M8 14q0-5 6-6M11 14q0-2 3-3"/><circle cx="13" cy="14" r="1" fill="#fff"/></svg></button>
        <button aria-label="Battery"><svg viewBox="0 0 16 16" fill="none" stroke="#fff"><path d="M6 4h8v8H5V8M14 6h1v4h-1M2 1v2M5 1v2M1 3h5v2L4 7H3L1 5zM3 7v2h2"/><path d="M7 6h3v4H7z" fill="#fff"/></svg></button>
        <button aria-label="Volume"><svg viewBox="0 0 16 16" fill="none" stroke="#fff"><path d="M1 6h2l4-4v12l-4-4H1zM9 6q2 2 0 4M11 4q3 4 0 8"/><path d="M13 2q5 6 0 12" stroke="#777"/></svg></button>
        <div class="clock"><time>19:14</time><time>23-04-2024</time></div>
        <button class="notices" aria-label="Notifications"><svg viewBox="0 0 18 18"><path d="M1 1h16v12h-8v4l-4-4H1z" fill="#fff"/><path d="M4 4h10M4 7h10M4 10h7" stroke="#222"/></svg><span class="badge">2</span></button>
      </div>
    </div>
  </div>
</body>
</html>
```

FILE: styles.css
```css
* {
  box-sizing: border-box;
}

body {
  margin: 0;
  background: #fff;
  color: #f2f2f2;
  font-family: "Open Sans", "Noto Sans", sans-serif;
  font-size: 11px;
}

button {
  display: flex;
  align-items: center;
  justify-content: center;
  margin: 0;
  padding: 0;
  border: 0;
  background: none;
  color: inherit;
  font: inherit;
  white-space: nowrap;
}

input {
  flex: 1;
  min-width: 0;
  padding: 0;
  border: 0;
  outline: 0;
  background: none;
  font: inherit;
}

svg {
  flex: none;
}

.defs {
  position: absolute;
  width: 0;
  height: 0;
}

.app {
  background: #494949;
}

.drop {
  width: 14px;
}

.drop svg,
.more {
  width: 6px;
  height: 4px;
}

.dim {
  color: #888;
}

/* title bar */
.titlebar {
  display: flex;
  align-items: center;
  height: 35px;
  border-top: 1px solid #bbb;
  border-bottom: 1px solid #bbb;
}

.logo {
  display: flex;
  align-items: center;
  gap: 4px;
  width: 136px;
  padding-left: 4px;
  font-family: Lato, sans-serif;
  font-size: 13px;
  font-style: italic;
}

.logo b {
  font-weight: 900;
}

.menu {
  display: flex;
  align-items: center;
  width: 284px;
  height: 33px;
  border-right: 1px solid #777;
}

.menu button {
  padding: 0 7px;
  font-size: 12px;
}

.menu .pin {
  padding: 0 4px;
}

.quick {
  display: flex;
  height: 30px;
  margin-left: 16px;
}

.quick button:not(.drop) {
  width: 30px;
}

.quick .pressed {
  background: #292929;
  border: 1px solid #111;
}

.doc-title {
  flex: 1;
  color: #bbb;
  text-align: center;
}

.search {
  display: flex;
  align-items: center;
  width: 202px;
  height: 23px;
  padding: 0 0 0 7px;
  background: #fff;
  color: #888;
}

.search input {
  margin-left: 6px;
  color: #555;
}

.search input::placeholder {
  color: #555;
  opacity: 1;
}

.search .drop {
  margin-left: 2px;
}

.window-buttons {
  display: flex;
  padding: 0 3px;
}

.window-buttons button {
  width: 36px;
}

/* ribbon */
.ribbon {
  display: flex;
  height: 82px;
  padding-bottom: 2px;
  border-bottom: 1px solid #808080;
}

.group {
  display: flex;
  border-right: 1px solid #808080;
  height: 78px;
}

.group-boss {
  padding-left: 6px;
}

.big {
  display: flex;
  flex-direction: column;
  justify-content: flex-start;
  position: relative;
  padding-top: 4px;
  line-height: 13px;
  white-space: normal;
}

.big svg:first-child {
  width: 20px;
  height: 20px;
  margin-bottom: 2px;
}

.big .more {
  position: absolute;
  bottom: 8px;
}

.w37 { width: 37px; }
.w41 { width: 41px; }
.w44 { width: 44px; }
.w45 { width: 45px; }
.w57 { width: 57px; }
.w58 { width: 58px; }
.w60 { width: 60px; }
.w63 { width: 63px; }

.w41 {
  margin-right: 4px;
}

.stack {
  width: 141px;
}

.stack button {
  justify-content: flex-start;
  gap: 6px;
  height: 26px;
  padding-left: 2px;
}

.stack svg {
  width: 20px;
  height: 20px;
}

.group + .group .stack {
  width: 108px;
}

.group .stack.w64 {
  width: 64px;
}

.group .stack.w85 {
  width: 85px;
}

.w64 button,
.w85 button {
  padding-left: 4px;
}

.instant {
  width: 60px;
  height: 79px;
  background: #2b2b2b;
  border: 1px solid #000;
}

.collapse {
  align-self: flex-end;
  margin: 0 8px 6px auto;
}

/* command tabs and view toolbar */
.document {
  background: linear-gradient(#000 22px, #424242);
}

.document-bar {
  display: flex;
  align-items: center;
  height: 22px;
}

.tabs {
  display: flex;
  align-self: stretch;
}

.tabs button {
  padding: 0 9px;
  background: #313131;
  border-right: 1px solid #808080;
  border-bottom: 1px solid #808080;
}

.tabs .active {
  padding: 0 7px;
  background: #494949;
  border-bottom: 0;
  font-weight: bold;
}

.view-tools {
  display: flex;
  margin: 8px 0 0 140px;
}

.view-tools button:not(.drop) {
  width: 26px;
}

.view-tools button:not(.drop) svg {
  width: 20px;
  height: 20px;
  opacity: .85;
}

.view-tools .drop {
  color: #777;
}

.child-buttons {
  display: flex;
  margin: 8px 7px 0 auto;
  color: #383838;
}

.child-buttons button {
  width: 26px;
}

/* feature manager */
.workspace {
  display: flex;
}

.sidebar {
  display: flex;
  flex-direction: column;
  position: relative;
  width: 230px;
  padding: 3px 2px 5px 1px;
  background: #494949;
  border-top: 1px solid #91a5aa;
  border-right: 1px solid #808080;
}

.grip {
  display: flex;
  align-items: center;
  justify-content: center;
  height: 16px;
  border-top: 1px solid #808080;
  border-bottom: 1px solid #808080;
}

.grip i,
.splitter i {
  width: 8px;
  height: 8px;
  border: 1px solid #888;
  border-radius: 50%;
  background: #ccc;
}

.panel-tabs {
  display: flex;
  margin-top: 4px;
  padding-left: 1px;
  border-top: 1px solid #808080;
}

.panel-tabs button {
  width: 40px;
  height: 25px;
  background: #333;
  border-right: 1px solid #808080;
  border-bottom: 1px solid #808080;
}

.panel-tabs button.active {
  background: none;
  border-bottom: 0;
}

.panel-tabs .next {
  flex: 1;
  padding-left: 4px;
  background: none;
  border-right: 0;
}

.panel-tabs svg,
.root svg,
.tree svg {
  width: 20px;
  height: 20px;
}

.filter {
  display: flex;
  align-items: center;
  height: 25px;
  margin: 1px 3px 0 4px;
  padding-left: 2px;
  background: #545454;
  border: 1px solid #808080;
}

.filter input {
  color: #fff;
}

.root {
  display: flex;
  align-items: center;
  gap: 3px;
  height: 23px;
  padding-left: 3px;
  border-bottom: 3px solid #e5ad2e;
  white-space: nowrap;
}

.tree {
  margin: 0;
  padding: 0;
  list-style: none;
  border-bottom: 3px solid #3d8fc4;
}

.tree li {
  display: flex;
  align-items: center;
  gap: 4px;
  position: relative;
  height: 22px;
  padding: 0 0 2px 25px;
  white-space: nowrap;
}

.tree .expand {
  position: absolute;
  left: 9px;
  width: 5px;
  height: 8px;
}

.scrollbar {
  display: flex;
  height: 17px;
  margin-top: auto;
  background: #f0f0f0;
}

.scrollbar button {
  width: 17px;
}

.scrollbar svg {
  width: 8px;
  height: 10px;
}

.track {
  flex: 1;
}

.thumb {
  width: 88%;
  height: 100%;
  background: #cdcdcd;
}

.splitter {
  position: absolute;
  top: 246px;
  right: -9px;
  width: 9px;
  height: 39px;
  background: #494949;
  border: 1px solid #808080;
  border-left: 0;
}

/* graphics area */
.viewport {
  display: flex;
  flex: 1;
  justify-content: center;
  position: relative;
  padding: 59px 6px 72px 0;
}

.rook {
  width: 198px;
  height: 424px;
  shape-rendering: crispEdges;
}

.edge {
  fill: none;
  stroke: #111;
  stroke-width: 3px;
}

.edge-fill {
  stroke: #111;
  stroke-width: 3px;
}

.top {
  fill: #ffffb2;
  stroke: #111;
  stroke-width: 3px;
}

.triad {
  position: absolute;
  bottom: 37px;
  left: 10px;
  font-size: 9px;
}

.view-name {
  position: absolute;
  bottom: 1px;
  left: 11px;
  margin: 0;
  color: #1a1a1a;
  font-size: 12px;
  font-weight: bold;
}

/* model tabs and status */
.model-tabs {
  display: flex;
  height: 16px;
  border-top: 1px solid #808080;
  border-bottom: 1px solid #808080;
}

.step-buttons {
  display: flex;
  width: 67px;
  padding-left: 2px;
}

.step-buttons button {
  width: 16px;
  background: #a8a8a8;
  border: 1px solid #777;
}

.step-buttons svg {
  width: 11px;
  height: 11px;
  fill: #888;
  stroke: #888;
}

.model-tabs > button {
  padding: 0 10px;
  background: #303030;
  border-right: 1px solid #808080;
  line-height: 12px;
  align-items: flex-start;
}

.model-tabs > .active {
  padding-left: 12px;
  background: none;
  font-weight: bold;
}

.model-tabs > .motion {
  padding: 0 18px 0 10px;
}

.status {
  display: flex;
  align-items: center;
  height: 18px;
  padding: 0 4px 0 1px;
}

.version {
  flex: 1;
}

.up {
  margin: 0 27px 0 18px;
}

/* taskbar */
.taskbar {
  display: flex;
  height: 40px;
  background: linear-gradient(90deg, #302722, #222 25%, #20252d 45%, #1e1e20 80%, #191919);
}

.taskbar > button {
  position: relative;
  width: 49px;
}

.taskbar > button > svg {
  width: 24px;
  height: 24px;
}

.taskbar > .start > svg {
  width: 18px;
  height: 18px;
}

.open::after {
  content: "";
  position: absolute;
  right: 4px;
  bottom: 0;
  left: 5px;
  height: 2px;
  background: #f890a0;
}

.current {
  background: #50555b;
}

.current::after {
  right: 0;
  left: 0;
}

.badge {
  position: absolute;
  right: 4px;
  bottom: 4px;
  width: 17px;
  height: 17px;
  background: #333a;
  border: 1px solid #aaa;
  border-radius: 50%;
  font-size: 12px;
  line-height: 15px;
  text-align: center;
}

.sw {
  fill: #fff;
  font-size: 9px;
  font-weight: bold;
}

.year {
  fill: #fff;
  stroke: #000;
  stroke-width: 2px;
  paint-order: stroke;
  font-size: 8px;
  font-weight: bold;
}

.tray {
  display: flex;
  margin-left: auto;
}

.tray button {
  width: 24px;
}

.tray svg {
  width: 16px;
  height: 16px;
}

.clock {
  display: flex;
  flex-direction: column;
  justify-content: center;
  width: 72px;
  font-size: 11px;
  line-height: 18px;
  text-align: center;
}

.tray .notices {
  justify-content: flex-start;
  position: relative;
  width: 52px;
  padding-left: 11px;
}

.notices .badge {
  right: 17px;
  background: #333;
}
```
